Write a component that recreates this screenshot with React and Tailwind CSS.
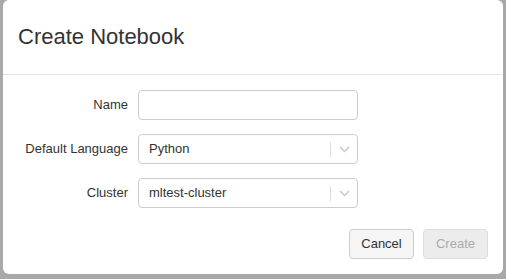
import React from 'react'

// Create Notebook modal over a dimmed page
function Chevron() {
  return (
    <svg width="11" height="7" viewBox="0 0 11 7" fill="none">
      <path d="M1 1l4.5 4.5L10 1" stroke="#c8c8c8" strokeWidth="1.5" />
    </svg>
  )
}

function Select({ value }) {
  return (
    <div className="flex items-center w-[220px] h-[30px] border border-[#cccccc] rounded-[4px] bg-white">
      <span className="flex-1 pl-[10px] text-[13px] text-[#333333]">{value}</span>
      <span className="w-px h-[15px] bg-[#dddddd]" />
      <span className="flex items-center justify-center w-[26px]">
        <Chevron />
      </span>
    </div>
  )
}

function Row({ label, children }) {
  return (
    <div className="flex items-center">
      <label className="w-[125px] text-right text-[13px] text-[#333333]">{label}</label>
      <div className="ml-[10px]">{children}</div>
    </div>
  )
}

export default function App() {
  return (
    <div className="w-[506px] h-[279px] bg-[#a9a9a9] px-[3px] font-['Liberation_Sans',Arial,sans-serif]">
      <div className="h-[274px] w-[500px] bg-white rounded-[6px] flex flex-col">
        <div className="h-[75px] flex items-center px-[15px] border-b border-[#e5e5e5]">
          <h1 className="text-[22px] text-[#333333] leading-none">Create Notebook</h1>
        </div>
        <div className="flex flex-col gap-[14px] pt-[15px]">
          <Row label="Name">
            <input className="w-[220px] h-[30px] border border-[#cccccc] rounded-[4px] outline-none px-[10px] text-[13px]" />
          </Row>
          <Row label="Default Language">
            <Select value="Python" />
          </Row>
          <Row label="Cluster">
            <Select value="mltest-cluster" />
          </Row>
        </div>
        <div className="flex justify-end gap-[9px] pr-[15px] pt-[21px]">
          <button className="w-[65px] h-[30px] border border-[#cccccc] rounded-[4px] bg-[#f5f5f5] text-[13px] text-[#333333]">Cancel</button>
          <button disabled className="w-[65px] h-[30px] border border-[#dddddd] rounded-[4px] bg-[#ececec] text-[13px] text-[#aaaaaa]">Create</button>
        </div>
      </div>
    </div>
  )
}
